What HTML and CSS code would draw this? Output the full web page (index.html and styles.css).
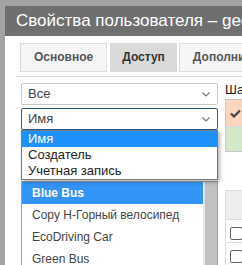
FILE: index.html
```html
<!DOCTYPE html>
<html lang="ru">
<head>
  <meta charset="UTF-8" />
  <title>Свойства пользователя</title>
  <link rel="stylesheet" href="styles.css">
</head>
<body>
  <div class="dialog">
    <div class="titlebar">Свойства пользователя – geozone-admin</div>
    <div class="body">
      <div class="tabs">
        <div class="tab">Основное</div>
        <div class="tab active">Доступ</div>
        <div class="tab">Дополнительно</div>
      </div>

      <div class="content">
        <div class="left">
          <div class="select">
            <span>Все</span>
            <svg class="chevron" width="8" height="5" viewBox="0 0 8 5"><polyline points="0.5,0.5 4,4 7.5,0.5" fill="none" stroke="#777" stroke-width="1.2"/></svg>
          </div>
          <div class="select focused">
            <span>Имя</span>
            <svg class="chevron" width="8" height="5" viewBox="0 0 8 5"><polyline points="0.5,0.5 4,4 7.5,0.5" fill="none" stroke="#777" stroke-width="1.2"/></svg>
            <ul class="dropdown">
              <li class="selected">Имя</li>
              <li>Создатель</li>
              <li>Учетная запись</li>
            </ul>
          </div>

          <div class="listbox">
            <ul class="items">
              <li class="current">Blue Bus</li>
              <li>Copy Н-Горный велосипед</li>
              <li>EcoDriving Car</li>
              <li>Green Bus</li>
            </ul>
            <div class="scrollbar"></div>
          </div>
        </div>

        <div class="right">
          <div class="label">Шаблоны</div>
          <div class="legend">
            <div class="row deny">
              <svg width="11" height="9" viewBox="0 0 11 9"><polyline points="1,4.5 4,7.5 10,1.5" fill="none" stroke="#444" stroke-width="2.2"/></svg>
            </div>
            <div class="row allow"></div>
          </div>
          <div class="table">
            <div class="thead"></div>
            <div class="trow"><span class="check"></span></div>
            <div class="trow"><span class="check"></span></div>
          </div>
        </div>
      </div>
    </div>
  </div>
</body>
</html>
```

FILE: styles.css
```css
html, body {
  margin: 0;
  height: 100%;
  overflow: hidden;
}

body {
  background: #a3a3a3;
  font-family: 'Liberation Sans', Arial, sans-serif;
  color: #333;
  padding: 6px 0 0 5px;
  box-sizing: border-box;
}

.dialog {
  width: 420px;
  height: 100%;
  background: #ffffff;
}

.titlebar {
  height: 30px;
  line-height: 30px;
  padding-left: 11px;
  background: #6f6f6f;
  color: #ffffff;
  font-size: 17px;
  white-space: nowrap;
}

.body {
  padding: 7px 0 0 11px;
}

.tabs {
  display: flex;
  gap: 2px;
  padding: 0 0 4px 4px;
  border-bottom: 1px solid #dcdcdc;
}

.tab {
  height: 27px;
  line-height: 27px;
  padding: 0 13px;
  border: 1px solid #dcdcdc;
  background: #f6f6f6;
  color: #555;
  font-size: 12px;
  font-weight: bold;
  white-space: nowrap;
}

.tab:first-child {
  margin-right: 1px;
}

.tab.active {
  padding: 0 11px;
  background: #dadada;
  border-color: #dadada;
  color: #333;
}

.content {
  display: flex;
  gap: 7px;
  padding-left: 5px;
}

.left {
  width: 197px;
  flex-shrink: 0;
}

.select {
  position: relative;
  height: 20px;
  line-height: 20px;
  margin-top: 6px;
  padding: 0 6px;
  border: 1px solid #c8c8c8;
  border-radius: 2px;
  font-size: 13px;
  color: #444;
}

.select + .select {
  margin-top: 3px;
}

.select.focused {
  border-color: #2a5f8f;
}

.chevron {
  position: absolute;
  right: 7px;
  top: 8px;
}

.dropdown {
  position: absolute;
  left: -1px;
  right: -1px;
  top: 21px;
  margin: 0;
  padding: 0;
  list-style: none;
  background: #ffffff;
  border: 1px solid #7a7a7a;
  box-shadow: 2px 2px 4px rgba(0, 0, 0, 0.3);
  z-index: 2;
}

.dropdown li {
  height: 16px;
  line-height: 16px;
  padding-left: 6px;
  color: #222;
}

.dropdown li.selected {
  background: #1e90ff;
  color: #ffffff;
}

.listbox {
  display: flex;
  width: 195px;
  margin-top: 51px;
  border: 1px solid #a0a0a0;
  border-bottom: none;
  height: 100px;
}

.items {
  flex: 1;
  margin: 0;
  padding: 0;
  list-style: none;
  font-size: 12px;
}

.items li {
  height: 22px;
  line-height: 22px;
  padding-left: 10px;
  color: #444;
  white-space: nowrap;
}

.items li.current {
  background: #3294f7;
  color: #ffffff;
  font-weight: bold;
}

.scrollbar {
  width: 12px;
  background: #c1c1c1;
  border-left: 2px solid #e6e6e6;
}

.right {
  flex: 1;
}

.label {
  margin-top: 5px;
  height: 16px;
  line-height: 16px;
  font-size: 13px;
  color: #222;
  white-space: nowrap;
}

.legend {
  margin-top: 1px;
  border: 1px solid #c8c8c8;
  border-right: none;
}

.legend .row {
  height: 26px;
  padding-left: 4px;
  display: flex;
  align-items: center;
}

.legend .deny {
  background: #fbd6bf;
  border-bottom: 1px solid #d8d8d8;
}

.legend .allow {
  background: #d3e8cb;
  height: 24px;
}

.table {
  margin-top: 38px;
  border-left: 1px solid #dcdcdc;
}

.thead {
  height: 28px;
  background: #eeeeee;
  border-top: 1px solid #dcdcdc;
  border-bottom: 1px solid #dcdcdc;
}

.trow {
  height: 23px;
  border-bottom: 1px solid #dcdcdc;
  padding: 7px 0 0 4px;
  box-sizing: border-box;
}

.check {
  display: block;
  width: 11px;
  height: 11px;
  border: 1px solid #666;
  border-radius: 2px;
  background: #ffffff;
}
```
